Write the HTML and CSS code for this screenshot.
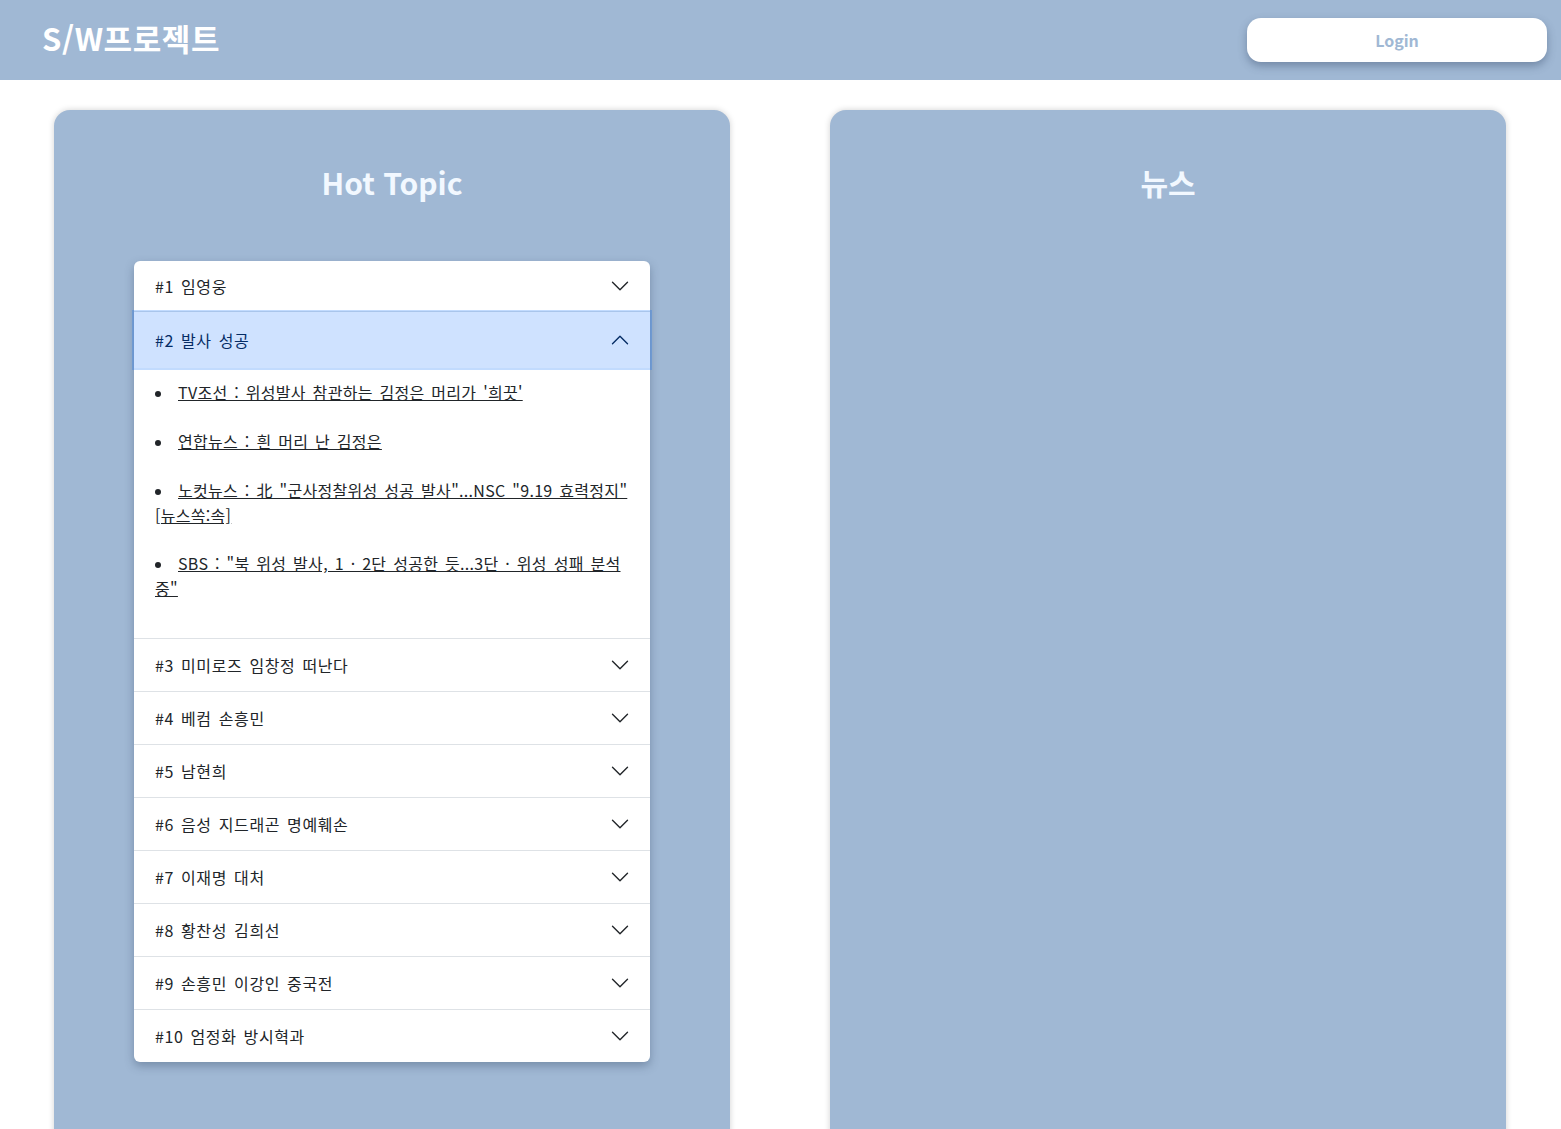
FILE: index.html
```html
<!DOCTYPE html>
<html lang="ko">
<head>
<meta charset="utf-8">
<title>S/W프로젝트</title>
<link rel="stylesheet" href="styles.css">
</head>
<body>
<header class="topbar">
  <h1 class="brand">S/W프로젝트</h1>
  <button class="login">Login</button>
</header>
<main class="board">
  <section class="card">
    <h2 class="card-title">Hot Topic</h2>
    <div class="accordion">
      <div class="acc-item">
        <div class="acc-head"><span>#1 임영웅</span><svg class="chev" viewBox="0 0 16 16"><path d="M2 5L8 11L14 5"/></svg></div>
      </div>
      <div class="acc-item open">
        <div class="acc-head"><span>#2 발사 성공</span><svg class="chev" viewBox="0 0 16 16"><path d="M2 5L8 11L14 5"/></svg></div>
        <div class="acc-body">
          <ul class="news">
            <li><a href="#">TV조선 : 위성발사 참관하는 김정은 머리가 '희끗'</a></li>
            <li><a href="#">연합뉴스 : 흰 머리 난 김정은</a></li>
            <li><a href="#">노컷뉴스 : 北 "군사정찰위성 성공 발사"...NSC "9.19 효력정지" [뉴스쏙:속]</a></li>
            <li><a href="#">SBS : "북 위성 발사, 1 · 2단 성공한 듯...3단 · 위성 성패 분석 중"</a></li>
          </ul>
        </div>
      </div>
      <div class="acc-item"><div class="acc-head"><span>#3 미미로즈 임창정 떠난다</span><svg class="chev" viewBox="0 0 16 16"><path d="M2 5L8 11L14 5"/></svg></div></div>
      <div class="acc-item"><div class="acc-head"><span>#4 베컴 손흥민</span><svg class="chev" viewBox="0 0 16 16"><path d="M2 5L8 11L14 5"/></svg></div></div>
      <div class="acc-item"><div class="acc-head"><span>#5 남현희</span><svg class="chev" viewBox="0 0 16 16"><path d="M2 5L8 11L14 5"/></svg></div></div>
      <div class="acc-item"><div class="acc-head"><span>#6 음성 지드래곤 명예훼손</span><svg class="chev" viewBox="0 0 16 16"><path d="M2 5L8 11L14 5"/></svg></div></div>
      <div class="acc-item"><div class="acc-head"><span>#7 이재명 대처</span><svg class="chev" viewBox="0 0 16 16"><path d="M2 5L8 11L14 5"/></svg></div></div>
      <div class="acc-item"><div class="acc-head"><span>#8 황찬성 김희선</span><svg class="chev" viewBox="0 0 16 16"><path d="M2 5L8 11L14 5"/></svg></div></div>
      <div class="acc-item"><div class="acc-head"><span>#9 손흥민 이강인 중국전</span><svg class="chev" viewBox="0 0 16 16"><path d="M2 5L8 11L14 5"/></svg></div></div>
      <div class="acc-item"><div class="acc-head"><span>#10 엄정화 방시혁과</span><svg class="chev" viewBox="0 0 16 16"><path d="M2 5L8 11L14 5"/></svg></div></div>
    </div>
  </section>
  <section class="card">
    <h2 class="card-title">뉴스</h2>
  </section>
</main>
</body>
</html>
```

FILE: styles.css
```css
* { box-sizing: border-box; }
html, body { margin: 0; padding: 0; }
body {
  font-family: "Noto Sans CJK KR", "Noto Sans", sans-serif;
  color: #212529;
  background: #fff;
  overflow: hidden;
  height: 1129px;
}
.topbar {
  height: 80px;
  background: #a0b8d4;
  display: flex;
  align-items: center;
  justify-content: space-between;
  padding: 0 14px 0 42px;
}
.brand {
  margin: 0;
  color: #fff;
  font-size: 31px;
  font-weight: 700;
  letter-spacing: 0.6px;
  line-height: 40px;
  margin-top: -4px;
}
.login {
  width: 300px;
  height: 44px;
  border: none;
  border-radius: 14px;
  background: #fff;
  color: #a0b8d4;
  font-family: inherit;
  font-size: 16px;
  font-weight: 700;
  box-shadow: 0 4px 8px rgba(60, 80, 110, 0.45);
}
.board {
  display: flex;
  gap: 100px;
  padding: 30px 0 0 54px;
}
.card {
  width: 676px;
  min-height: 1100px;
  background: #a0b8d4;
  border-radius: 16px 16px 0 0;
  box-shadow: 0 0 6px rgba(0, 0, 0, 0.18);
  padding-top: 48px;
}
.card-title {
  margin: 0;
  text-align: center;
  color: #f2f8ff;
  font-size: 30px;
  line-height: 48px;
  font-weight: 700;
}
.accordion {
  margin: 55px 0 0 80px;
  width: 516px;
  background: #fff;
  border-radius: 6px;
  box-shadow: 0 4px 10px rgba(40, 60, 90, 0.35);
}
.acc-item {
  border-top: 1px solid #dee2e6;
}
.acc-item:first-child { border-top: none; }
.acc-item:last-child .acc-head { border-radius: 0 0 6px 6px; }
.acc-head {
  display: flex;
  align-items: center;
  justify-content: space-between;
  height: 52px;
  padding: 0 20px 0 21px;
  font-size: 16px;
  letter-spacing: 0.6px;
  word-spacing: 2px;
  color: #212529;
}
.acc-item:first-child .acc-head { height: 50px; }
.chev {
  width: 20px;
  height: 20px;
  fill: none;
  stroke: #212529;
  stroke-width: 1.1;
  stroke-linecap: round;
  stroke-linejoin: round;
}
.open .acc-head {
  position: relative;
  background: #cfe2ff;
  color: #052c65;
  height: 56px;
  box-shadow: 0 0 0 2px rgba(13, 110, 253, 0.25);
}
.open .chev {
  stroke: #052c65;
  transform: rotate(180deg);
}
.acc-body {
  padding: 12px 20px 14px 21px;
}
.news {
  margin: 0;
  padding: 0;
  list-style: disc inside;
  font-size: 16px;
  line-height: 24px;
  letter-spacing: 0.3px;
  word-spacing: 2px;
  word-break: keep-all;
}
.news li { margin-bottom: 24px; }
.news li::marker { font-size: 15px; }
.news a {
  color: #212529;
  text-decoration: underline;
  margin-left: 1px;
}
```
